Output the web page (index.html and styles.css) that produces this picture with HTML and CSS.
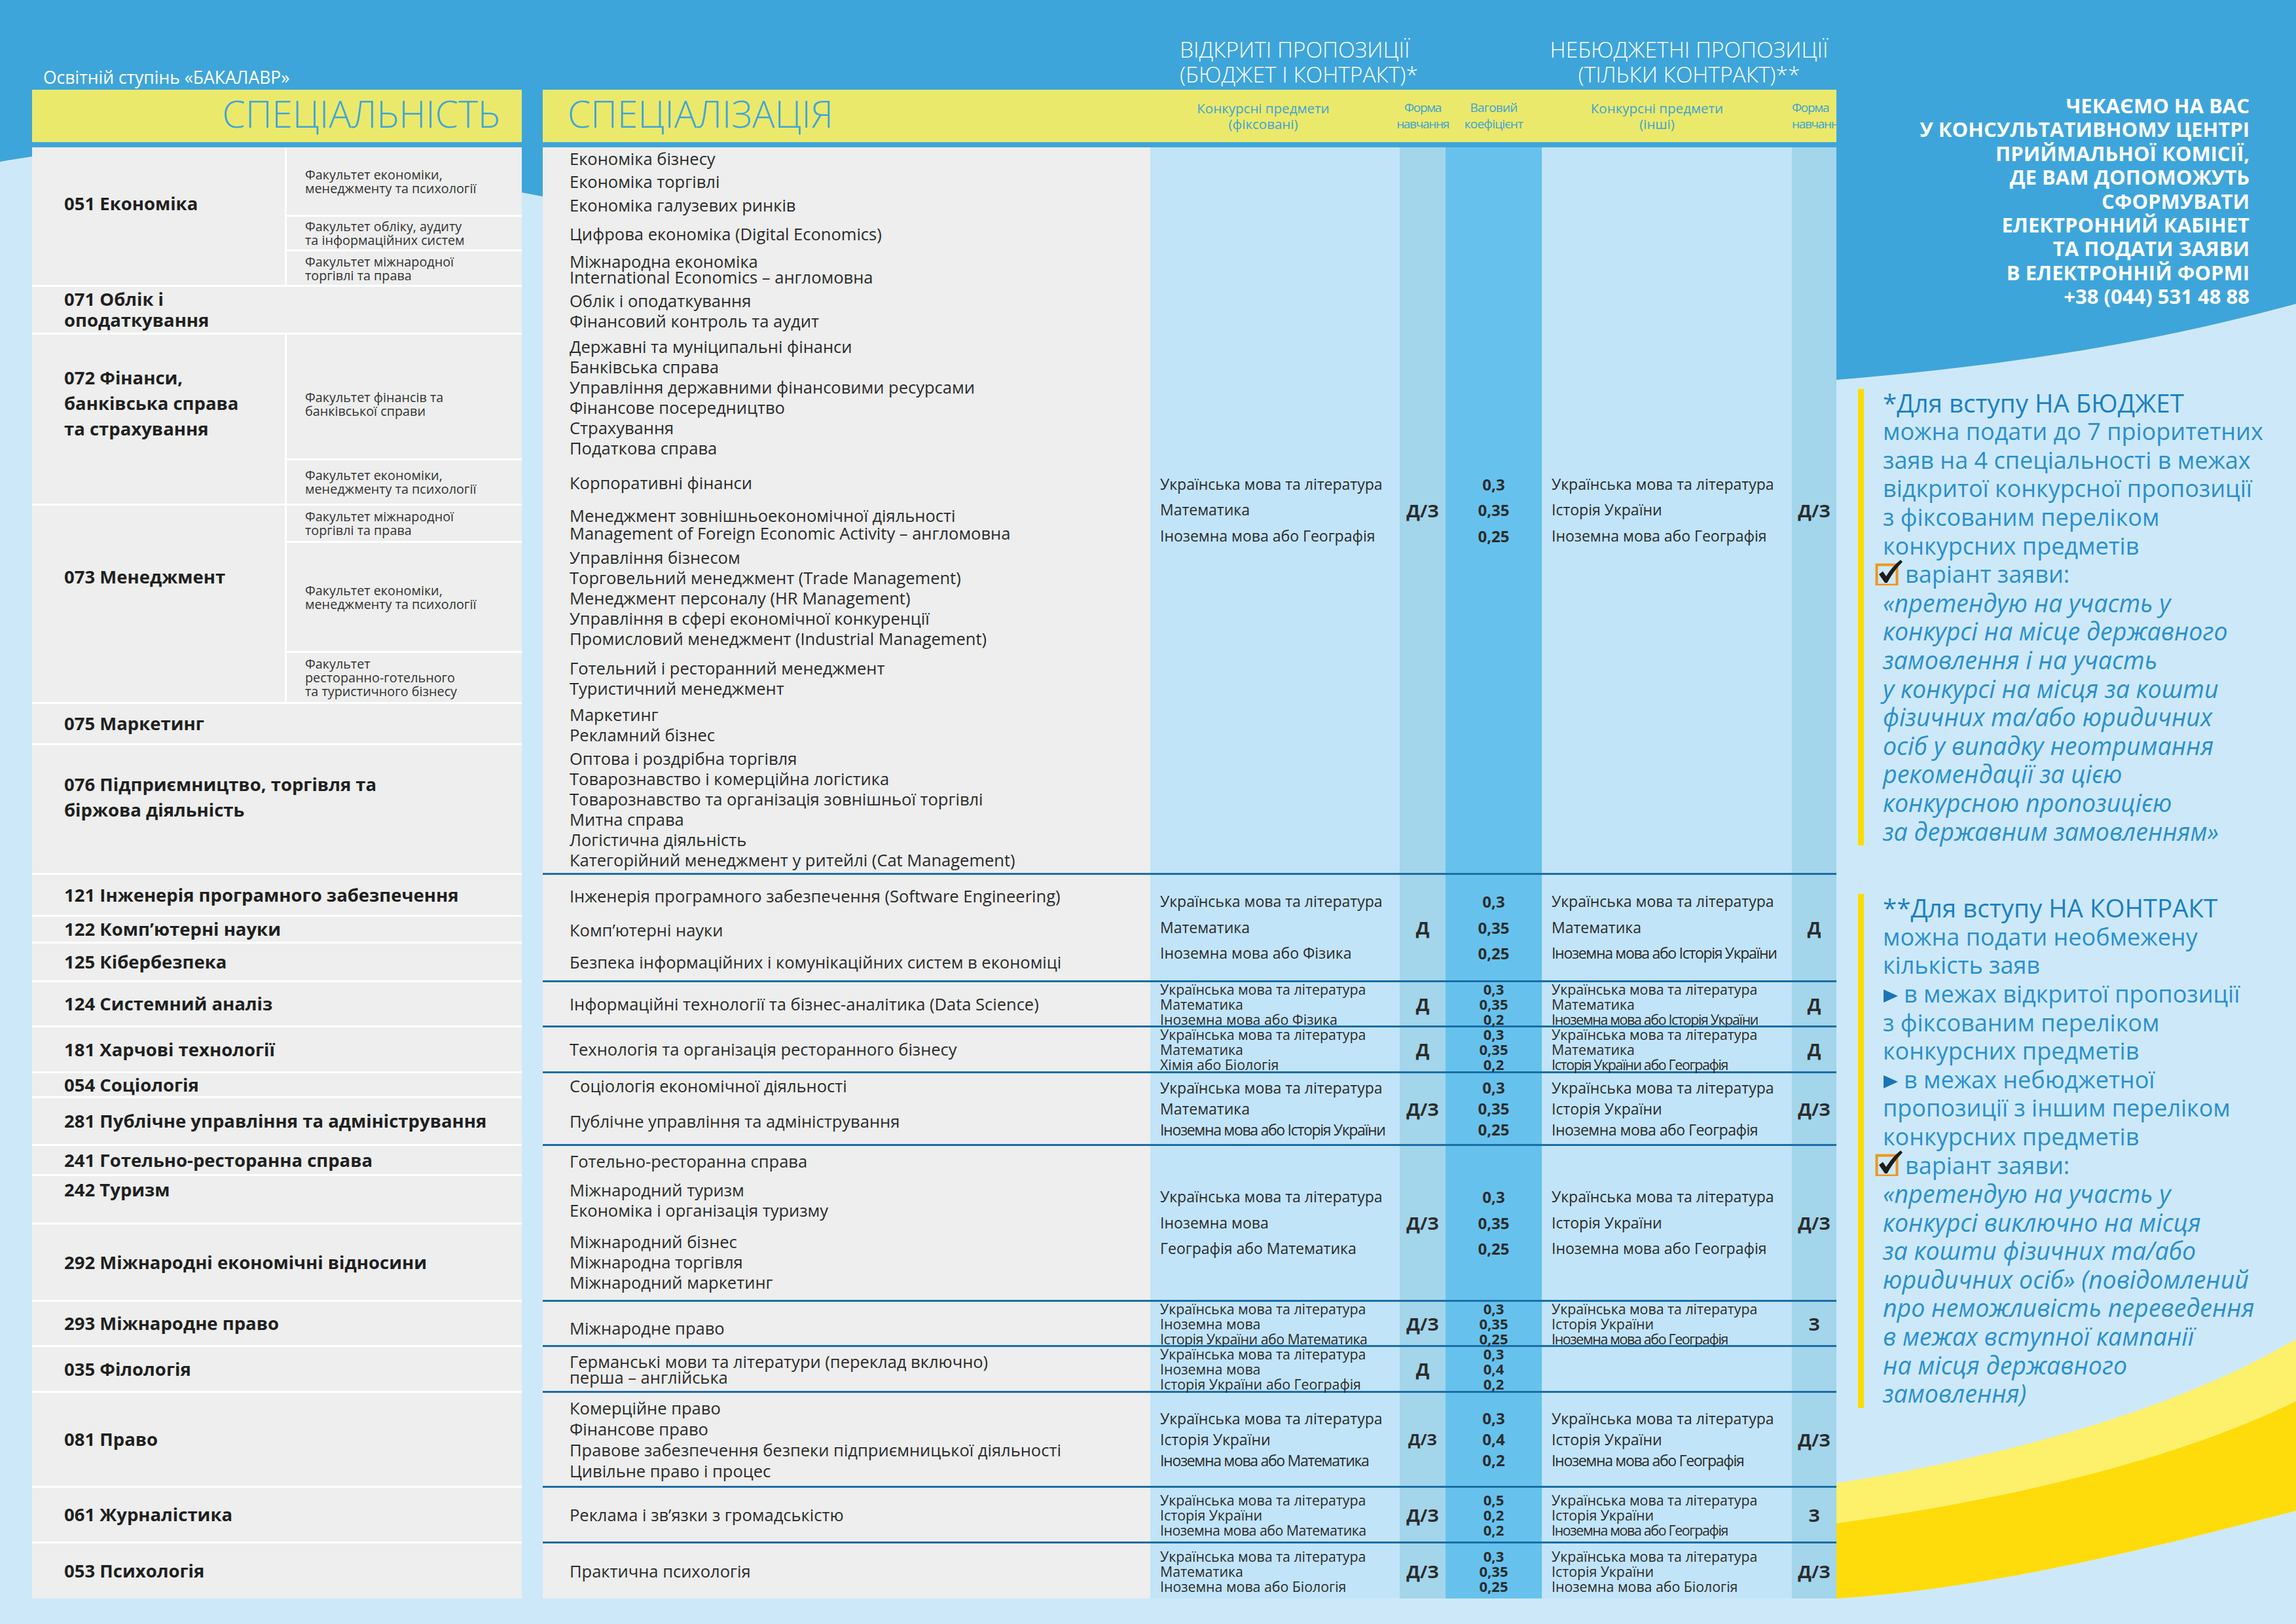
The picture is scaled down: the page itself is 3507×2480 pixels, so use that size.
FILE: index.html
```html
<!DOCTYPE html>
<html lang="uk">
<head>
<meta charset="utf-8">
<title>Освітній ступінь «БАКАЛАВР»</title>
<link rel="stylesheet" href="styles.css">
</head>
<body>
<svg class="bg" viewBox="0 0 3507 2480" width="3507" height="2480" aria-hidden="true">
  <path class="bg-light" d="M0,247 C250,200 600,240 1200,380 C2000,560 2500,610 2805,580 C3100,555 3300,520 3507,464 L3507,2480 L0,2480 Z"/>
  <path class="bg-ylight" d="M2300,2310 C2700,2300 3200,2225 3507,2045 L3507,2307 C3300,2360 3050,2425 2805,2441 L2300,2420 Z"/>
  <path class="bg-ydark" d="M2300,2370 C2700,2355 3200,2290 3507,2140 L3507,2307 C3300,2360 3050,2425 2805,2441 L2300,2420 Z"/>
</svg>
<div class="page">
  <main class="main">
    <div class="cols top">
      <div class="edu">Освітній ступінь «БАКАЛАВР»</div>
      <div class="prop prop1">ВІДКРИТІ ПРОПОЗИЦІЇ<br>(БЮДЖЕТ І КОНТРАКТ)*</div>
      <div class="prop prop2">НЕБЮДЖЕТНІ ПРОПОЗИЦІЇ<br>(ТІЛЬКИ КОНТРАКТ)**</div>
    </div>
    <div class="cols head">
      <div class="h-spec"><span class="title">СПЕЦІАЛЬНІСТЬ</span></div>
      <div class="h-sp"><span class="title">СПЕЦІАЛІЗАЦІЯ</span></div>
      <div class="lbl h-s1">Конкурсні предмети<br>(фіксовані)</div>
      <div class="lbl small h-f1">Форма<br>навчання</div>
      <div class="lbl small h-w">Ваговий<br>коефіцієнт</div>
      <div class="lbl h-s2">Конкурсні предмети<br>(інші)</div>
      <div class="lbl small h-f2">Форма<br>навчання</div>
    </div>

    <div class="tbl">
      <!-- Block A -->
      <section class="cols blk blk-a vbig">
        <div class="v s1"><span>Українська мова та література</span><span>Математика</span><span>Іноземна мова або Географія</span></div>
        <div class="v fm f1">Д/З</div>
        <div class="v w"><span>0,3</span><span>0,35</span><span>0,25</span></div>
        <div class="v s2"><span>Українська мова та література</span><span>Історія України</span><span>Іноземна мова або Географія</span></div>
        <div class="v fm f2">Д/З</div>

        <div class="spec rs3 up20">051 Економіка</div>
        <div class="fac">Факультет економіки,<br>менеджменту та психології</div>
        <div class="sp lh35">Економіка бізнесу<br>Економіка торгівлі<br>Економіка галузевих ринків</div>
        <div class="fac">Факультет обліку, аудиту<br>та інформаційних систем</div>
        <div class="sp">Цифрова економіка (Digital Economics)</div>
        <div class="fac">Факультет міжнародної<br>торгівлі та права</div>
        <div class="sp lh24">Міжнародна економіка<br>International Economics – англомовна</div>

        <div class="specw lh32">071 Облік і<br>оподаткування</div>
        <div class="sp">Облік і оподаткування<br>Фінансовий контроль та аудит</div>

        <div class="spec rs2 lh39 up25">072 Фінанси,<br>банківська справа<br>та страхування</div>
        <div class="fac down10">Факультет фінансів та<br>банківської справи</div>
        <div class="sp">Державні та муніципальні фінанси<br>Банківська справа<br>Управління державними фінансовими ресурсами<br>Фінансове посередництво<br>Страхування<br>Податкова справа</div>
        <div class="fac">Факультет економіки,<br>менеджменту та психології</div>
        <div class="sp">Корпоративні фінанси</div>

        <div class="spec rs3 up40">073 Менеджмент</div>
        <div class="fac">Факультет міжнародної<br>торгівлі та права</div>
        <div class="sp lh27">Менеджмент зовнішньоекономічної діяльності<br>Management of Foreign Economic Activity – англомовна</div>
        <div class="fac">Факультет економіки,<br>менеджменту та психології</div>
        <div class="sp">Управління бізнесом<br>Торговельний менеджмент (Trade Management)<br>Менеджмент персоналу (HR Management)<br>Управління в сфері економічної конкуренції<br>Промисловий менеджмент (Industrial Management)</div>
        <div class="fac">Факультет<br>ресторанно-готельного<br>та туристичного бізнесу</div>
        <div class="sp">Готельний і ресторанний менеджмент<br>Туристичний менеджмент</div>

        <div class="specw">075 Маркетинг</div>
        <div class="sp">Маркетинг<br>Рекламний бізнес</div>

        <div class="specw lh39 up20">076 Підприємництво, торгівля та<br>біржова діяльність</div>
        <div class="sp last">Оптова і роздрібна торгівля<br>Товарознавство і комерційна логістика<br>Товарознавство та організація зовнішньої торгівлі<br>Митна справа<br>Логістична діяльність<br>Категорійний менеджмент у ритейлі (Cat Management)</div>
      </section>

      <!-- Block B -->
      <section class="cols blk blk-b vbig">
        <div class="v s1"><span>Українська мова та література</span><span>Математика</span><span>Іноземна мова або Фізика</span></div>
        <div class="v fm f1">Д</div>
        <div class="v w"><span>0,3</span><span>0,35</span><span>0,25</span></div>
        <div class="v s2"><span>Українська мова та література</span><span>Математика</span><span class="sq">Іноземна мова або Історія України</span></div>
        <div class="v fm f2">Д</div>
        <div class="specw">121 Інженерія програмного забезпечення</div>
        <div class="sp">Інженерія програмного забезпечення (Software Engineering)</div>
        <div class="specw">122 Комп’ютерні науки</div>
        <div class="sp">Комп’ютерні науки</div>
        <div class="specw">125 Кібербезпека</div>
        <div class="sp last">Безпека інформаційних і комунікаційних систем в економіці</div>
      </section>

      <!-- Block C -->
      <section class="cols blk blk-c vcmp">
        <div class="v s1"><span>Українська мова та література</span><span>Математика</span><span>Іноземна мова або Фізика</span></div>
        <div class="v fm f1">Д</div>
        <div class="v w"><span>0,3</span><span>0,35</span><span>0,2</span></div>
        <div class="v s2"><span>Українська мова та література</span><span>Математика</span><span class="sq">Іноземна мова або Історія України</span></div>
        <div class="v fm f2">Д</div>
        <div class="specw">124 Системний аналіз</div>
        <div class="sp last">Інформаційні технології та бізнес-аналітика (Data Science)</div>
      </section>

      <!-- Block D -->
      <section class="cols blk blk-d vcmp">
        <div class="v s1"><span>Українська мова та література</span><span>Математика</span><span>Хімія або Біологія</span></div>
        <div class="v fm f1">Д</div>
        <div class="v w"><span>0,3</span><span>0,35</span><span>0,2</span></div>
        <div class="v s2"><span>Українська мова та література</span><span>Математика</span><span class="sq">Історія України або Географія</span></div>
        <div class="v fm f2">Д</div>
        <div class="specw">181 Харчові технології</div>
        <div class="sp last">Технологія та організація ресторанного бізнесу</div>
      </section>

      <!-- Block E -->
      <section class="cols blk blk-e vmid">
        <div class="v s1"><span>Українська мова та література</span><span>Математика</span><span class="sq">Іноземна мова або Історія України</span></div>
        <div class="v fm f1">Д/З</div>
        <div class="v w"><span>0,3</span><span>0,35</span><span>0,25</span></div>
        <div class="v s2"><span>Українська мова та література</span><span>Історія України</span><span class="sq2">Іноземна мова або Географія</span></div>
        <div class="v fm f2">Д/З</div>
        <div class="specw">054 Соціологія</div>
        <div class="sp">Соціологія економічної діяльності</div>
        <div class="specw">281 Публічне управління та адміністрування</div>
        <div class="sp last">Публічне управління та адміністрування</div>
      </section>

      <!-- Block F -->
      <section class="cols blk blk-f vbig">
        <div class="v s1"><span>Українська мова та література</span><span>Іноземна мова</span><span>Географія або Математика</span></div>
        <div class="v fm f1">Д/З</div>
        <div class="v w"><span>0,3</span><span>0,35</span><span>0,25</span></div>
        <div class="v s2"><span>Українська мова та література</span><span>Історія України</span><span>Іноземна мова або Географія</span></div>
        <div class="v fm f2">Д/З</div>
        <div class="specw">241 Готельно-ресторанна справа</div>
        <div class="sp">Готельно-ресторанна справа</div>
        <div class="specw top-al">242 Туризм</div>
        <div class="sp">Міжнародний туризм<br>Економіка і організація туризму</div>
        <div class="specw">292 Міжнародні економічні відносини</div>
        <div class="sp last">Міжнародний бізнес<br>Міжнародна торгівля<br>Міжнародний маркетинг</div>
      </section>

      <!-- Block G -->
      <section class="cols blk blk-g vcmp">
        <div class="v s1"><span>Українська мова та література</span><span>Іноземна мова</span><span class="sq2">Історія України або Математика</span></div>
        <div class="v fm f1">Д/З</div>
        <div class="v w"><span>0,3</span><span>0,35</span><span>0,25</span></div>
        <div class="v s2"><span>Українська мова та література</span><span>Історія України</span><span class="sq">Іноземна мова або Географія</span></div>
        <div class="v fm f2">З</div>
        <div class="specw">293 Міжнародне право</div>
        <div class="sp last down8">Міжнародне право</div>
      </section>

      <!-- Block H -->
      <section class="cols blk blk-h vcmp">
        <div class="v s1"><span>Українська мова та література</span><span>Іноземна мова</span><span>Історія України або Географія</span></div>
        <div class="v fm f1">Д</div>
        <div class="v w"><span>0,3</span><span>0,4</span><span>0,2</span></div>
        <div class="v s2"></div>
        <div class="v fm f2"></div>
        <div class="specw">035 Філологія</div>
        <div class="sp last lh24">Германські мови та літератури (переклад включно)<br>перша – англійська</div>
      </section>

      <!-- Block I -->
      <section class="cols blk blk-i vmid">
        <div class="v s1"><span>Українська мова та література</span><span>Історія України</span><span class="sq">Іноземна мова або Математика</span></div>
        <div class="v fm f1 fm-sm">Д/З</div>
        <div class="v w"><span>0,3</span><span>0,4</span><span>0,2</span></div>
        <div class="v s2"><span>Українська мова та література</span><span>Історія України</span><span class="sq">Іноземна мова або Географія</span></div>
        <div class="v fm f2">Д/З</div>
        <div class="specw">081 Право</div>
        <div class="sp last lh32">Комерційне право<br>Фінансове право<br>Правове забезпечення безпеки підприємницької діяльності<br>Цивільне право і процес</div>
      </section>

      <!-- Block J -->
      <section class="cols blk blk-j vcmp">
        <div class="v s1"><span>Українська мова та література</span><span>Історія України</span><span class="sq2">Іноземна мова або Математика</span></div>
        <div class="v fm f1">Д/З</div>
        <div class="v w"><span>0,5</span><span>0,2</span><span>0,2</span></div>
        <div class="v s2"><span>Українська мова та література</span><span>Історія України</span><span class="sq">Іноземна мова або Географія</span></div>
        <div class="v fm f2">З</div>
        <div class="specw">061 Журналістика</div>
        <div class="sp last">Реклама і зв’язки з громадськістю</div>
      </section>

      <!-- Block K -->
      <section class="cols blk blk-k vcmp">
        <div class="v s1"><span>Українська мова та література</span><span>Математика</span><span>Іноземна мова або Біологія</span></div>
        <div class="v fm f1">Д/З</div>
        <div class="v w"><span>0,3</span><span>0,35</span><span>0,25</span></div>
        <div class="v s2"><span>Українська мова та література</span><span>Історія України</span><span>Іноземна мова або Біологія</span></div>
        <div class="v fm f2">Д/З</div>
        <div class="specw">053 Психологія</div>
        <div class="sp last">Практична психологія</div>
      </section>
    </div>
  </main>

  <aside class="aside">
    <p class="call">ЧЕКАЄМО НА ВАС<br>У КОНСУЛЬТАТИВНОМУ ЦЕНТРІ<br>ПРИЙМАЛЬНОЇ КОМІСІЇ,<br>ДЕ ВАМ ДОПОМОЖУТЬ<br>СФОРМУВАТИ<br>ЕЛЕКТРОННИЙ КАБІНЕТ<br>ТА ПОДАТИ ЗАЯВИ<br>В ЕЛЕКТРОННІЙ ФОРМІ<br>+38 (044) 531 48 88</p>

    <div class="note">
      <p class="note-h">*Для вступу НА БЮДЖЕТ</p>
      <p>можна подати до 7 пріоритетних<br>заяв на 4 спеціальності в межах<br>відкритої конкурсної пропозиції<br>з фіксованим переліком<br>конкурсних предметів</p>
      <p class="opt"><svg class="chk" viewBox="0 0 44 40" width="44" height="40" aria-hidden="true"><rect x="2.5" y="8.5" width="31" height="31" fill="none" stroke="#f0951c" stroke-width="4"/><path d="M6,23 L12,18.5 L17,26 Q26,11 39,1 L42,4 Q29,17 18.5,36 L15,36 Z" fill="#1d1d1b"/></svg>варіант заяви:</p>
      <p class="quote">«претендую на участь у<br>конкурсі на місце державного<br>замовлення і на участь<br>у конкурсі на місця за кошти<br>фізичних та/або юридичних<br>осіб у випадку неотримання<br>рекомендації за цією<br>конкурсною пропозицією<br>за державним замовленням»</p>
    </div>

    <div class="note note2">
      <p class="note-h">**Для вступу НА КОНТРАКТ</p>
      <p>можна подати необмежену<br>кількість заяв<br><svg class="arr" viewBox="0 0 24 22" width="24" height="22" aria-hidden="true"><path d="M1,1 L23,11 L1,21 Z" fill="#1a74b6"/></svg>в межах відкритої пропозиції<br>з фіксованим переліком<br>конкурсних предметів<br><svg class="arr" viewBox="0 0 24 22" width="24" height="22" aria-hidden="true"><path d="M1,1 L23,11 L1,21 Z" fill="#1a74b6"/></svg>в межах небюджетної<br>пропозиції з іншим переліком<br>конкурсних предметів</p>
      <p class="opt"><svg class="chk" viewBox="0 0 44 40" width="44" height="40" aria-hidden="true"><rect x="2.5" y="8.5" width="31" height="31" fill="none" stroke="#f0951c" stroke-width="4"/><path d="M6,23 L12,18.5 L17,26 Q26,11 39,1 L42,4 Q29,17 18.5,36 L15,36 Z" fill="#1d1d1b"/></svg>варіант заяви:</p>
      <p class="quote">«претендую на участь у<br>конкурсі виключно на місця<br>за кошти фізичних та/або<br>юридичних осіб» (повідомлений<br>про неможливість переведення<br>в межах вступної кампанії<br>на місця державного<br>замовлення)</p>
    </div>
  </aside>
</div>
</body>
</html>
```

FILE: styles.css
```css
* { box-sizing: border-box; }
html, body { margin: 0; padding: 0; }
body {
  width: 3507px;
  height: 2480px;
  overflow: hidden;
  position: relative;
  background: #3ea5da;
  font-family: "Open Sans", "Noto Sans", sans-serif;
  color: #2b2b2b;
}
p { margin: 0; }

.bg { position: absolute; left: 0; top: 0; z-index: 0; }
.bg-light { fill: #cde9f9; }
.bg-ylight { fill: #fdf06b; }
.bg-ydark { fill: #fedc0b; }

.page {
  position: relative;
  z-index: 1;
  display: flex;
  width: 3507px;
  height: 2480px;
}
.main { flex: none; width: 2756px; margin-left: 49px; }

.cols {
  display: grid;
  grid-template-columns: 386px 362px 32px 928px 381px 70px 147px 382px 68px;
}

/* top captions */
.top { height: 137px; align-items: end; color: #fff; }
.edu { grid-column: 1 / span 2; font-size: 26.5px; line-height: 30px; padding: 0 0 4px 17px; white-space: nowrap; }
.prop { font-size: 33.5px; line-height: 38px; font-weight: 300; padding-bottom: 5px; white-space: nowrap; }
.prop1 { grid-column: 5 / span 3; padding-left: 45px; }
.prop2 { grid-column: 8 / span 2; text-align: center; }

/* yellow header */
.head {
  height: 80px;
  margin-bottom: 8px;
  color: #3ea3d3;
  background: linear-gradient(to right, #ebe96b 0 748px, transparent 748px 780px, #ebe96b 780px);
}
.head > div { display: flex; align-items: center; }
.h-spec { grid-column: 1 / span 2; justify-content: flex-end; padding-right: 33px; }
.h-sp { grid-column: 4; padding-left: 38px; }
.title { font-size: 57px; font-weight: 300; line-height: 1; padding-bottom: 8px; white-space: nowrap; color: #3ea5da; }
.head .lbl {
  flex-direction: column;
  justify-content: center;
  text-align: center;
  font-weight: 400;
  font-size: 20.5px;
  line-height: 24px;
  white-space: nowrap;
}
.head .small { font-size: 19px; line-height: 25px; letter-spacing: -1.3px; }
.head .h-w { letter-spacing: -0.8px; }
.h-s1 { grid-column: 5; padding-right: 36px; }
.h-f1 { grid-column: 6; }
.h-w { grid-column: 7; }
.h-s2 { grid-column: 8; padding-right: 30px; }
.head .h-f2 { grid-column: 9; align-items: flex-start; text-align: left; overflow: hidden; padding-left: 0; }

/* table blocks */
.blk-a { grid-template-rows: 106px 53px 54px 73px 192px 69px 57px 168px 78px 63px 198px; }
.blk-b { grid-template-rows: 64px 41px 59px; }
.blk-c { grid-template-rows: 69px; }
.blk-d { grid-template-rows: 70px; }
.blk-e { grid-template-rows: 38px 73px; }
.blk-f { grid-template-rows: 46px 74px 118px; }
.blk-g { grid-template-rows: 69px; }
.blk-h { grid-template-rows: 70px; }
.blk-i { grid-template-rows: 145px; }
.blk-j { grid-template-rows: 85px; }
.blk-k { grid-template-rows: 84px; }

.spec, .specw, .fac {
  background: #edeeed;
  border-bottom: 3px solid #fff;
  display: flex;
  align-items: center;
}
.spec { grid-column: 1; }
.specw { grid-column: 1 / span 2; }
.spec, .specw {
  padding-left: 49px;
  font-weight: 700;
  font-size: 27.5px;
  line-height: 32px;
  color: #1f1f1f;
  white-space: nowrap;
}
.fac {
  grid-column: 2;
  border-left: 3px solid #fff;
  padding-left: 28px;
  font-size: 19.8px;
  line-height: 21px;
  color: #333;
  white-space: nowrap;
}
.rs2 { grid-row: span 2; }
.rs3 { grid-row: span 3; }
.up20 { padding-bottom: 38px; }
.up25 { padding-bottom: 50px; }
.up40 { padding-bottom: 82px; }
.down10 { padding-top: 22px; }
.down8 { padding-top: 14px; }
.top-al { align-items: flex-start; padding-top: 5px; }

.sp {
  grid-column: 4;
  background: #edeeed;
  display: flex;
  flex-direction: column;
  justify-content: center;
  padding-left: 41px;
  font-size: 25.5px;
  line-height: 31px;
  color: #2b2b2b;
  white-space: nowrap;
}
.spec.lh32, .specw.lh32, .lh32 { line-height: 32px; }
.sp.lh24 { line-height: 24px; }
.sp.lh27 { line-height: 27px; }
.sp.lh35 { line-height: 35.5px; }
.spec.lh39, .specw.lh39 { line-height: 39px; }

.v {
  grid-row: 1 / -1;
  display: flex;
  flex-direction: column;
  justify-content: center;
  white-space: nowrap;
  border-bottom: 3px solid #1c6ea4;
  color: #2b2b2b;
}
.v span { display: block; }
.s1 { grid-column: 5; background: #c1e4f8; padding-left: 15px; }
.f1 { grid-column: 6; background: #a3d5eb; }
.w { grid-column: 7; background: #66c2ed; align-items: center; font-weight: 700; }
.s2 { grid-column: 8; background: #c1e4f8; padding-left: 15px; }
.f2 { grid-column: 9; background: #a3d5eb; }
.last { border-bottom: 3px solid #1c6ea4; }

.vbig .v { font-size: 23px; line-height: 39.5px; }
.vmid .v { font-size: 23px; line-height: 32px; }
.vcmp .v { font-size: 21.3px; line-height: 23px; }
.vbig .w, .vmid .w { font-size: 24px; }
.vcmp .w { font-size: 22px; }
.blk .fm { align-items: center; font-weight: 700; font-size: 27px; line-height: 1; color: #2b2b2b; }
.blk .fm-sm { font-size: 24px; }
.sq { letter-spacing: -1.3px; }
.sq2 { letter-spacing: -0.5px; }

.blk:last-child .v,
.blk:last-child .last,
.blk:last-child .specw { border-bottom: 0; }

/* right aside */
.aside { flex: 1; min-width: 0; }
.call {
  padding: 143px 71px 0 0;
  text-align: right;
  font-weight: 700;
  font-size: 31px;
  line-height: 36.4px;
  color: #fff;
  white-space: nowrap;
}
.note {
  margin: 123px 0 0 33px;
  border-left: 9px solid #fcdb00;
  padding-left: 29px;
  font-size: 36px;
  line-height: 43.6px;
  color: #2b8fcc;
  white-space: nowrap;
}
.note2 { margin-top: 74px; }
.note-h { font-size: 38.5px; font-weight: 500; color: #1b80c1; }
.opt { display: flex; align-items: center; margin-left: -12px; }
.chk { flex: none; margin-right: 2px; margin-top: -6px; }
.quote { font-style: italic; font-weight: 400; font-size: 37.5px; }
.arr { vertical-align: -1px; margin-right: 8px; }
```
